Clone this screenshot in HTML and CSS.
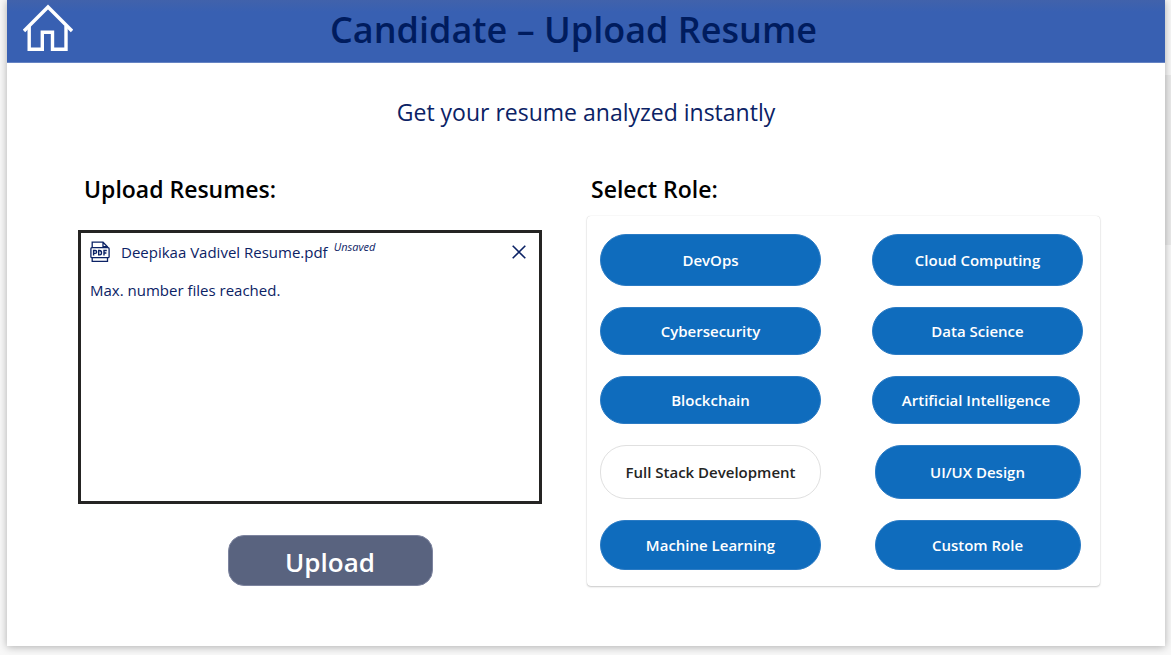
FILE: index.html
```html
<!DOCTYPE html>
<html lang="en">
<head>
<meta charset="utf-8">
<title>Candidate – Upload Resume</title>
<link rel="stylesheet" href="styles.css">
</head>
<body>
<div class="shell">
  <div class="screen">
    <header class="topbar">
      <a class="home" href="#" aria-label="Home">
        <svg width="50" height="48" viewBox="0 0 50 48" fill="none" stroke="#fff" stroke-width="3.4">
          <path d="M1 27 25 3 49 27"/>
          <path d="M6.200 22V45.300H19.300V28.300H29.500V45.300H43V22"/>
        </svg>
      </a>
      <h1 class="title">Candidate – Upload Resume</h1>
    </header>
    <p class="tagline">Get your resume analyzed instantly</p>
    <main class="columns">
      <section class="upload">
        <h2 class="heading">Upload Resumes:</h2>
        <div class="files">
          <div class="file">
            <svg class="pdf" width="20" height="22" viewBox="0 0 20 22" fill="none" stroke="#0b2265" stroke-width="1.300">
              <path d="M2.200 6.500V1.200H13L17.500 5.700V6.500M13 1.200V5.700H17.500M2.200 16.500V20.300H17.500V16.500"/>
              <rect x="0.900" y="6.700" width="18.200" height="10" rx="1"/>
              <path d="M3.600 14.500V9.500H5.200a1.400 1.400 0 0 1 0 2.900H3.600M8.700 9.500V13.900H9.500a2 2.200 0 0 0 0-4.400ZM14 14.500V9.500H16.800M14 12H16.400" stroke-width="1.400"/>
            </svg>
            <a class="name" href="#">Deepikaa Vadivel Resume.pdf</a>
            <em class="state">Unsaved</em>
            <button class="remove" type="button" aria-label="Remove file">
              <svg width="14" height="14" viewBox="0 0 14 14" fill="none" stroke="#0b2265" stroke-width="1.600"><path d="M.7.700 13.300 13.300M13.300.7.700 13.300"/></svg>
            </button>
          </div>
          <p class="limit">Max. number files reached.</p>
        </div>
        <button class="submit" type="button">Upload</button>
      </section>
      <section class="roles">
        <h2 class="heading">Select Role:</h2>
        <div class="panel">
          <button class="role" type="button">DevOps</button>
          <button class="role" type="button">Cloud Computing</button>
          <button class="role" type="button">Cybersecurity</button>
          <button class="role" type="button">Data Science</button>
          <button class="role" type="button">Blockchain</button>
          <button class="role medium" type="button">Artificial Intelligence</button>
          <button class="role selected" type="button" aria-pressed="true">Full Stack Development</button>
          <button class="role narrow" type="button">UI/UX Design</button>
          <button class="role" type="button">Machine Learning</button>
          <button class="role narrow" type="button">Custom Role</button>
        </div>
      </section>
    </main>
  </div>
  <div class="track"><div class="thumb"></div></div>
</div>
</body>
</html>
```
FILE: styles.css
```css
* { box-sizing: border-box; }
body {
  margin: 0;
  background: #f8f8f8;
  color: #0b2265;
  font-family: "Open Sans", "Noto Sans", sans-serif;
}
h1, h2, p { margin: 0; }
button { font-family: inherit; cursor: pointer; }
svg { display: block; }
.shell {
  display: grid;
  grid-template-columns: 1fr 6px;
  min-height: 100vh;
  padding: 0 0 9px 7px;
}
.screen {
  background: #fff;
  box-shadow: 0 1px 8px rgba(0, 0, 0, 0.3);
}
.track { padding-top: 75px; }
.thumb { height: 170px; background: rgba(0, 0, 0, 0.05); }
.topbar {
  display: grid;
  grid-template-columns: 50px 1fr 75px;
  align-items: center;
  height: 63px;
  padding: 0 16px;
  border-bottom: 1px solid #6583c3;
  background: linear-gradient(#4162ab, #3860b2 12px);
}
.home { padding-bottom: 6px; }
.title {
  padding-bottom: 2px;
  color: #001c5e;
  font-size: 36px;
  font-weight: 600;
  line-height: 60px;
  text-align: center;
  white-space: nowrap;
}
.tagline {
  padding-top: 33px;
  font-size: 23px;
  line-height: 32px;
  text-align: center;
}
.columns {
  display: grid;
  grid-template-columns: 464fr 513fr;
  column-gap: 45px;
  padding: 44px 65px 60px 71px;
}
.upload, .roles { display: flex; flex-direction: column; }
.heading {
  color: #000;
  font-size: 23px;
  font-weight: 600;
  line-height: 34px;
}
.upload .heading { padding-left: 6px; }
.roles .heading { padding-left: 4px; }
.files {
  min-height: 274px;
  margin-top: 24px;
  padding: 7px 9px;
  border: 3px solid #252423;
}
.file { display: flex; align-items: center; }
.name {
  margin-left: 11px;
  color: inherit;
  font-size: 15px;
  line-height: 24px;
  text-decoration: none;
}
.state {
  align-self: flex-start;
  margin-left: 6px;
  font-size: 11px;
  line-height: 14px;
}
.remove {
  margin-left: auto;
  padding: 4px;
  border: 0;
  background: none;
}
.limit { padding-top: 14px; font-size: 15px; line-height: 24px; }
.submit {
  align-self: center;
  width: 205px;
  height: 51px;
  margin: 31px 0 0 40px;
  padding: 2px 0 0;
  border: 1px solid #7d849f;
  border-radius: 16px;
  background: #59637f;
  color: #fff;
  font-size: 26px;
  font-weight: 600;
}
.panel {
  display: grid;
  grid-template-columns: 221fr 211fr;
  grid-template-rows: 52px 48px 48px 54px 50px;
  gap: 21px 51px;
  margin-top: 10px;
  padding: 18px 17px 16px 13px;
  border-radius: 4px;
  box-shadow: 0 0 1px rgba(0, 0, 0, 0.2), 0 1px 2px rgba(0, 0, 0, 0.2);
}
.role {
  padding: 0;
  border: 1px solid #2b7bc4;
  border-radius: 26px;
  background: #0f6cbd;
  color: #fff;
  font-size: 15px;
  font-weight: 600;
}
.role.medium { justify-self: start; width: 208px; }
.role.narrow { justify-self: center; width: 206px; }
.role.selected {
  border-color: #e0e0e0;
  background: #fff;
  color: #242424;
}
```
